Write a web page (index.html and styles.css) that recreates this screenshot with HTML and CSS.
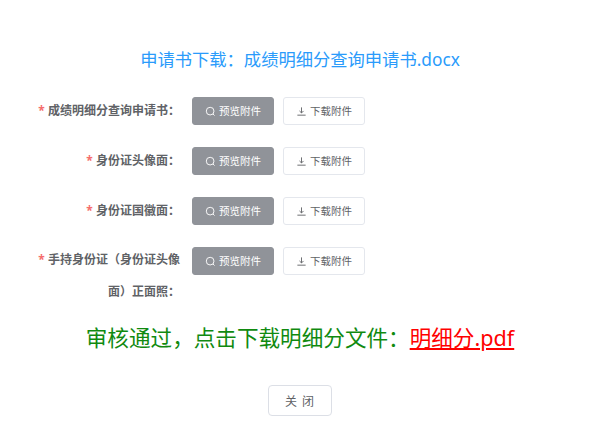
FILE: index.html
```html
<!DOCTYPE html>
<html lang="zh-CN">
<head>
    <meta charset="UTF-8">
    <title>申请书下载</title>
    <link rel="stylesheet" href="styles.css">
</head>
<body>
    <div class="dialog">
        <div class="apply-title">申请书下载：成绩明细分查询申请书.docx</div>

        <div class="form">
            <div class="form-item">
                <label class="form-label"><span class="star">*</span> 成绩明细分查询申请书：</label>
                <div class="form-content">
                    <button class="btn btn-preview"><svg class="icon" viewBox="0 0 12 12"><circle cx="5.6" cy="5.6" r="4.2"/><path d="M8.7 8.7L10.4 10.4"/></svg><span class="btn-text">预览附件</span></button>
                    <button class="btn btn-download"><svg class="icon" viewBox="0 0 12 12"><path d="M6 1.5V7.5M3.8 5.4L6 7.6L8.2 5.4M1.5 10H10.5"/></svg><span class="btn-text">下载附件</span></button>
                </div>
            </div>
            <div class="form-item">
                <label class="form-label"><span class="star">*</span> 身份证头像面：</label>
                <div class="form-content">
                    <button class="btn btn-preview"><svg class="icon" viewBox="0 0 12 12"><circle cx="5.6" cy="5.6" r="4.2"/><path d="M8.7 8.7L10.4 10.4"/></svg><span class="btn-text">预览附件</span></button>
                    <button class="btn btn-download"><svg class="icon" viewBox="0 0 12 12"><path d="M6 1.5V7.5M3.8 5.4L6 7.6L8.2 5.4M1.5 10H10.5"/></svg><span class="btn-text">下载附件</span></button>
                </div>
            </div>
            <div class="form-item">
                <label class="form-label"><span class="star">*</span> 身份证国徽面：</label>
                <div class="form-content">
                    <button class="btn btn-preview"><svg class="icon" viewBox="0 0 12 12"><circle cx="5.6" cy="5.6" r="4.2"/><path d="M8.7 8.7L10.4 10.4"/></svg><span class="btn-text">预览附件</span></button>
                    <button class="btn btn-download"><svg class="icon" viewBox="0 0 12 12"><path d="M6 1.5V7.5M3.8 5.4L6 7.6L8.2 5.4M1.5 10H10.5"/></svg><span class="btn-text">下载附件</span></button>
                </div>
            </div>
            <div class="form-item form-item-tall">
                <label class="form-label"><span class="star">*</span> 手持身份证（身份证头像面）正面照：</label>
                <div class="form-content">
                    <button class="btn btn-preview"><svg class="icon" viewBox="0 0 12 12"><circle cx="5.6" cy="5.6" r="4.2"/><path d="M8.7 8.7L10.4 10.4"/></svg><span class="btn-text">预览附件</span></button>
                    <button class="btn btn-download"><svg class="icon" viewBox="0 0 12 12"><path d="M6 1.5V7.5M3.8 5.4L6 7.6L8.2 5.4M1.5 10H10.5"/></svg><span class="btn-text">下载附件</span></button>
                </div>
            </div>
        </div>

        <div class="result">审核通过，点击下载明细分文件：<a class="result-link" href="#">明细分.pdf</a></div>

        <div class="footer">
            <button class="btn-close">关 闭</button>
        </div>
    </div>
</body>
</html>
```

FILE: styles.css
```css
body {
    margin: 0;
    background: #fff;
    font-family: "Noto Sans", "Noto Sans CJK SC", sans-serif;
    overflow: hidden;
}

.dialog {
    width: 600px;
    height: 429px;
    padding-top: 49px;
    box-sizing: border-box;
}

.apply-title {
    text-align: center;
    font-size: 17.3px;
    line-height: 21px;
    color: #2a9bfb;
}

.form {
    margin-top: 27px;
}

.form-item {
    display: flex;
    gap: 12px;
    height: 50px;
}

.form-item-tall {
    height: 64px;
}

.form-label {
    width: 149px;
    margin-left: 31px;
    flex-shrink: 0;
    text-align: right;
    font-size: 12px;
    font-weight: bold;
    line-height: 28px;
    color: #606266;
}

.form-item-tall .form-label {
    line-height: 32px;
    margin-top: -3px;
}

.star {
    color: #f56c6c;
}

.form-content {
    display: flex;
    gap: 9px;
    align-items: flex-start;
}

.btn {
    display: flex;
    align-items: center;
    justify-content: center;
    gap: 3px;
    width: 82px;
    height: 28px;
    padding: 0;
    border-radius: 3px;
    font-family: inherit;
    font-size: 10.5px;
}

.btn-text {
    padding-bottom: 2px;
}

.btn-preview {
    background: #909399;
    border: 1px solid #909399;
    color: #fff;
}

.btn-download {
    background: #fff;
    border: 1px solid #e4e7ed;
    color: #606266;
}

.icon {
    width: 11px;
    height: 11px;
    fill: none;
    stroke: currentColor;
    stroke-width: 1;
}

.result {
    margin-top: 12px;
    text-align: center;
    font-size: 21.6px;
    line-height: 30px;
    color: #108a10;
}

.result-link {
    color: #f00;
    text-decoration: underline;
}

.footer {
    margin-top: 32px;
    text-align: center;
}

.btn-close {
    width: 64px;
    height: 31px;
    padding: 0;
    background: #fff;
    border: 1px solid #dcdfe6;
    border-radius: 4px;
    font-family: inherit;
    font-size: 12px;
    letter-spacing: 1px;
    color: #606266;
}
```
